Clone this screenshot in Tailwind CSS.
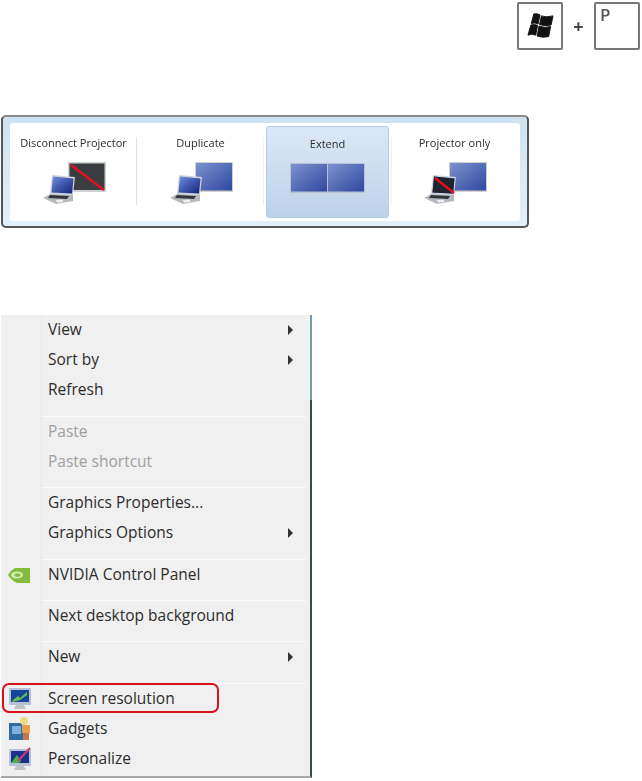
<!DOCTYPE html>
<html lang="en">
<head>
    <meta charset="UTF-8">
    <meta name="viewport" content="width=device-width, initial-scale=1.0">
    <title>Projector and display menu</title>
    <script src="https://cdn.jsdelivr.net/npm/@tailwindcss/browser@4"></script>
</head>
<body class="bg-white h-[781px] w-[642px] overflow-hidden font-['Open_Sans',sans-serif] text-[#2c2c2c]">
    <svg class="absolute w-0 h-0">
        <defs>
            <linearGradient id="blue" x1="0" y1="0" x2="1" y2="1">
                <stop offset="0" stop-color="#7d92cf"/>
                <stop offset="1" stop-color="#2f48a0"/>
            </linearGradient>
            <linearGradient id="lap" x1="0" y1="0" x2="1" y2="1">
                <stop offset="0" stop-color="#6f90e0"/>
                <stop offset="1" stop-color="#101f78"/>
            </linearGradient>
            <symbol id="laptop" viewBox="0 0 34 30">
                <path d="M10 1 L33 3 L31 21 L8 20 Z" fill="#cdd3dc"/>
                <path d="M11 2.500 L31.500 4.500 L30 19.500 L9.500 18.500 Z" fill="url(#lap)"/>
                <path d="M8 20 L31 21 L31 27 L14 30 L1 24 Z" fill="#b6babe"/>
                <path d="M8 21 L27 22 L25 25 L6 24 Z" fill="#33363b"/>
                <path d="M14 26 L21 25.500 L21 28 L15 28.500 Z" fill="#eef0f2"/>
            </symbol>
        </defs>
    </svg>

    <div class="blur-[0.6px]">
        <!-- keyboard shortcut -->
        <div class="flex justify-end items-center h-[115px] pb-[64px] pr-[2px]">
            <div class="w-[46px] h-[48px] border-2 border-[#777] rounded-[2px] flex items-center justify-center">
                <svg width="27" height="26" viewBox="0 0 28 27">
                    <path d="M7 1 Q10 0 13.500 2 L11.500 11.500 Q8 9.500 4.500 11 Z" fill="#111" stroke="#111" stroke-linejoin="round"/>
                    <path d="M15 3 Q19 5 27 3 L25 12.500 Q18 14 13 12 Z" fill="#111" stroke="#111" stroke-linejoin="round"/>
                    <path d="M4 12.500 Q8 11 11 13 L9 23 Q5 21 1 23 Z" fill="#111" stroke="#111" stroke-linejoin="round"/>
                    <path d="M12.500 13.500 Q18 16 24.500 14 L22.500 24.500 Q16 26 10.500 24 Z" fill="#111" stroke="#111" stroke-linejoin="round"/>
                </svg>
            </div>
            <span class="w-[31px] text-center text-[18px] leading-none font-bold text-[#444]">+</span>
            <div class="w-[46px] h-[48px] border-2 border-[#777] rounded-[2px] pl-[4px] text-[17px] leading-[22px] font-semibold text-[#555]">P</div>
        </div>

        <!-- projector switcher -->
        <div class="ml-px w-[528px] h-[113px] rounded-[5px] border-2 border-[#555] border-t-[#8a8a8a] bg-[linear-gradient(180deg,#cfe2f1,#e4f0f9)] py-[6px] px-[7px]">
            <div class="grid grid-cols-[127px_127px_127px_127px] h-[98px] bg-white rounded-[3px]">
                <div class="relative flex flex-col items-center pt-[11px]">
                    <span class="text-[11px] leading-[18px]">Disconnect Projector</span>
                    <div class="relative w-[64px] h-[42px] mt-[10px]">
                        <svg class="absolute right-0 top-0" width="38" height="30" viewBox="0 0 38 30">
                            <rect width="38" height="30" fill="#cfd0d0"/>
                            <rect x="1.500" y="1.500" width="35" height="26.500" fill="#3b3e40"/>
                            <path d="M3 3 L36 28" stroke="#e01020" stroke-width="2.500"/>
                        </svg>
                        <svg class="absolute left-0 bottom-0" width="34" height="30"><use href="#laptop"/></svg>
                    </div>
                    <div class="absolute right-0 top-[14px] h-[68px] w-px bg-[#dfe3e6]"></div>
                </div>
                <div class="relative flex flex-col items-center pt-[11px]">
                    <span class="text-[11px] leading-[18px]">Duplicate</span>
                    <div class="relative w-[64px] h-[42px] mt-[10px]">
                        <svg class="absolute right-0 top-0" width="38" height="30" viewBox="0 0 38 30">
                            <rect width="38" height="30" fill="#cfd0d0"/>
                            <rect x="1" y="1" width="36" height="27.500" fill="url(#blue)"/>
                        </svg>
                        <svg class="absolute left-0 bottom-0" width="34" height="30"><use href="#laptop"/></svg>
                    </div>
                    <div class="absolute right-0 top-[14px] h-[68px] w-px bg-[#eef0f2]"></div>
                </div>
                <div class="flex flex-col items-center pt-[8px] mx-[2px] h-[92px] self-center rounded-[3px] border border-[#b4cde6] bg-[linear-gradient(180deg,#dce8f6,#bcd1ea)]">
                    <span class="text-[11px] leading-[18px]">Extend</span>
                    <svg class="mt-[10px]" width="75" height="30" viewBox="0 0 75 30">
                        <rect width="75" height="30" fill="#b9c2cf"/>
                        <rect x="1" y="1" width="36" height="27.500" fill="url(#blue)"/>
                        <rect x="38" y="1" width="36" height="27.500" fill="url(#blue)"/>
                    </svg>
                </div>
                <div class="relative flex flex-col items-center pt-[11px]">
                    <span class="text-[11px] leading-[18px]">Projector only</span>
                    <div class="relative w-[64px] h-[42px] mt-[10px]">
                        <svg class="absolute right-0 top-0" width="38" height="30" viewBox="0 0 38 30">
                            <rect width="38" height="30" fill="#cfd0d0"/>
                            <rect x="1" y="1" width="36" height="27.500" fill="url(#blue)"/>
                        </svg>
                        <svg class="absolute left-0 bottom-0" width="34" height="30" viewBox="0 0 34 30">
                            <use href="#laptop"/>
                            <path d="M11 2.500 L31.500 4.500 L30 19.500 L9.500 18.500 Z" fill="#20242c"/>
                            <path d="M12 4 L31 19" stroke="#e01020" stroke-width="2.500"/>
                        </svg>
                    </div>
                    <div class="absolute left-0 top-[14px] h-[68px] w-px bg-[#eef0f2]"></div>
                </div>
            </div>
        </div>

        <!-- desktop context menu -->
        <div class="relative mt-[87px] ml-px w-[311px] h-[463px] bg-[#f0f0f0] border-r-2 border-b-2 border-r-[#3c4a50] border-b-[#a8a8a8] text-[15.500px]">
            <div class="absolute left-[40px] top-0 bottom-0 w-px bg-[#e8e8e8]"></div>
            <div class="absolute -right-[2px] top-0 w-[2px] h-[85px] bg-[#6a9fb5]"></div>

            <div class="flex items-center justify-between h-[30px] pl-[47px] pr-[17px]">View <span class="w-0 h-0 border-y-[5px] border-y-transparent border-l-[5px] border-l-[#333]"></span></div>
            <div class="flex items-center justify-between h-[30px] pl-[47px] pr-[17px]">Sort by <span class="w-0 h-0 border-y-[5px] border-y-transparent border-l-[5px] border-l-[#333]"></span></div>
            <div class="flex items-center h-[30px] pl-[47px]">Refresh</div>
            <div class="h-[12px] ml-[41px] mr-[4px] border-b border-b-[#fbfbfb]"></div>
            <div class="flex items-center h-[30px] pl-[47px] text-[#a0a0a0]">Paste</div>
            <div class="flex items-center h-[30px] pl-[47px] text-[#a0a0a0]">Paste shortcut</div>
            <div class="h-[11px] ml-[41px] mr-[4px] border-b border-b-[#fbfbfb]"></div>
            <div class="flex items-center h-[30px] pl-[47px]">Graphics Properties...</div>
            <div class="flex items-center justify-between h-[30px] pl-[47px] pr-[17px]">Graphics Options <span class="w-0 h-0 border-y-[5px] border-y-transparent border-l-[5px] border-l-[#333]"></span></div>
            <div class="h-[12px] ml-[41px] mr-[4px] border-b border-b-[#fbfbfb]"></div>
            <div class="flex items-center h-[30px] pl-[7px]">
                <svg class="mr-[18px]" width="22" height="16" viewBox="0 0 22 16">
                    <path d="M7 1 H22 V16 H9 Q3 13 0 8 Q3 3 7 1 Z" fill="#84bd3c"/>
                    <ellipse cx="9" cy="8" rx="6" ry="3.500" fill="#d7ebb6"/>
                    <ellipse cx="9.500" cy="8" rx="3" ry="1.800" fill="#84bd3c"/>
                </svg>
                NVIDIA Control Panel
            </div>
            <div class="h-[11px] ml-[41px] mr-[4px] border-b border-b-[#fbfbfb]"></div>
            <div class="flex items-center h-[30px] pl-[47px]">Next desktop background</div>
            <div class="h-[11px] ml-[41px] mr-[4px] border-b border-b-[#fbfbfb]"></div>
            <div class="flex items-center justify-between h-[30px] pl-[47px] pr-[17px]">New <span class="w-0 h-0 border-y-[5px] border-y-transparent border-l-[5px] border-l-[#333]"></span></div>
            <div class="h-[12px] ml-[41px] mr-[4px] border-b border-b-[#fbfbfb]"></div>
            <div class="flex items-center h-[30px] pl-[8px]">
                <svg class="mr-[17px]" width="22" height="22" viewBox="0 0 22 22">
                    <rect width="22" height="17" rx="1" fill="#b7c0d6"/>
                    <rect x="2" y="2" width="18" height="12" fill="#17479a"/>
                    <path d="M3 13 L9 8 L11 10 L18 4 V7 L11 12 L4 14 Z" fill="#66c24a"/>
                    <path d="M7 17 H15 L17 21 H5 Z" fill="#bfc3c8"/>
                </svg>
                Screen resolution
            </div>
            <div class="flex items-center h-[30px] pl-[8px]">
                <svg class="mr-[17px]" width="22" height="24" viewBox="0 0 22 24">
                    <rect x="0" y="6" width="15" height="17" fill="#2e6ca4"/>
                    <rect x="3" y="9" width="9" height="8" fill="#7fb2dc"/>
                    <circle cx="15" cy="4" r="4" fill="#f0dc7c"/>
                    <rect x="13" y="8" width="8" height="8" fill="#e6a052"/>
                    <rect x="14" y="16" width="6" height="7" fill="#c9764a"/>
                </svg>
                Gadgets
            </div>
            <div class="flex items-center h-[30px] pl-[8px]">
                <svg class="mr-[17px]" width="22" height="24" viewBox="0 0 22 24">
                    <rect y="2" width="22" height="17" rx="1" fill="#b7c0d6"/>
                    <rect x="2" y="4" width="18" height="12" fill="#1c2f8c"/>
                    <path d="M2 16 L8 8 L12 14 L10 16 Z" fill="#4cb04a"/>
                    <path d="M9 14 L21 1" stroke="#c83a70" stroke-width="2"/>
                    <path d="M7 19 H15 L17 23 H5 Z" fill="#bfc3c8"/>
                </svg>
                Personalize
            </div>

            <!-- red callout -->
            <div class="absolute left-px top-[368px] w-[217px] h-[30px] border-2 border-[#d8101c] rounded-[7px]"></div>
        </div>
    </div>
</body>
</html>
